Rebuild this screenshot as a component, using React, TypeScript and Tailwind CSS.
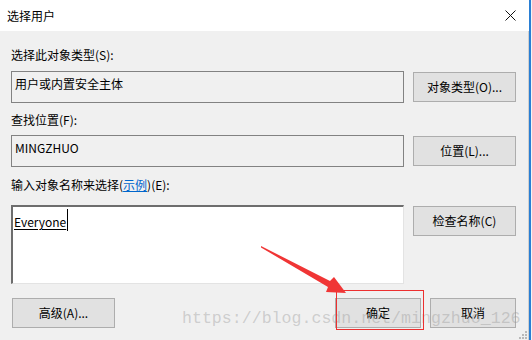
import React from "react";

const FONT = { fontFamily: '"Microsoft YaHei", "Noto Sans CJK SC", "Noto Sans", sans-serif' };

function Btn({ children, className = "" }: { children: React.ReactNode; className?: string }) {
  return (
    <div
      className={`flex items-center justify-center h-[30px] bg-[#e1e1e1] border border-[#adadad] text-[12px] leading-[16px] text-black ${className}`}
    >
      {children}
    </div>
  );
}

export default function App() {
  return (
    <div className="relative w-[532px] h-[340px] overflow-hidden bg-white flex" style={FONT}>
      {/* dialog */}
      <div className="w-[528px] h-full flex flex-col">
        {/* title bar */}
        <div className="h-[31px] bg-white flex items-center justify-between pl-[7px] pr-[12px] shrink-0">
          <span className="text-[12px] leading-[16px] text-black">选择用户</span>
          <svg width="11" height="11" viewBox="0 0 11 11">
            <path d="M0.5 0.5 L10.5 10.5 M10.5 0.5 L0.5 10.5" stroke="#111" strokeWidth="1" />
          </svg>
        </div>
        {/* body */}
        <div className="flex-1 bg-[#f0f0f0] flex flex-col pl-[11px] text-[12px] leading-[16px] text-black">
          <div className="mt-[16px] h-[16px]">选择此对象类型(S):</div>
          <div className="mt-[8px] flex items-center gap-[9px]">
            <div className="w-[393px] h-[32px] border border-[#828282] bg-[#f0f0f0] pl-[3px] pt-[4px]">
              用户或内置安全主体
            </div>
            <Btn className="w-[103px]">对象类型(O)...</Btn>
          </div>
          <div className="mt-[9px] h-[16px]">查找位置(F):</div>
          <div className="mt-[7px] flex items-center gap-[9px]">
            <div className="w-[393px] h-[32px] border border-[#828282] bg-[#f0f0f0] pl-[3px] pt-[4px]">
              MINGZHUO
            </div>
            <Btn className="w-[103px]">位置(L)...</Btn>
          </div>
          <div className="mt-[10px] h-[16px]">
            输入对象名称来选择(<span className="text-[#0066cc] underline">示例</span>)(E):
          </div>
          <div className="mt-[12px] flex items-start gap-[9px]">
            <div className="w-[393px] h-[79px] bg-white border-t-2 border-l-2 border-t-[#6d6d6d] border-l-[#6d6d6d] border-b border-r border-b-[#e3e3e3] border-r-[#e3e3e3] pl-[1px] pt-[7px] flex items-start">
              <span className="underline underline-offset-[2px]">Everyone</span>
              <span className="inline-block w-[1px] h-[22px] bg-black -mt-[5px] ml-[1px]" />
            </div>
            <Btn className="w-[103px] h-[29px] mt-[1px]">检查名称(C)</Btn>
          </div>
          <div className="mt-[14px] flex items-center">
            <Btn className="w-[103px] ml-[1px]">高级(A)...</Btn>
            <div className="flex-1" />
            <Btn className="w-[86px]">确定</Btn>
            <Btn className="w-[86px] ml-[9px] mr-[12px]">取消</Btn>
          </div>
        </div>
      </div>
      {/* right edges */}
      <div className="w-[1px] h-full flex flex-col">
        <div className="h-[31px] bg-white" />
        <div className="flex-1 bg-[#cfcfcf]" />
      </div>
      <div className="w-[2px] h-full bg-[#2a7fd4]" />
      <div className="w-[1px] h-full bg-[#f4f4f4]" />

      {/* resize grip */}
      <svg className="absolute left-[519px] top-[331px]" width="9" height="9" viewBox="0 0 9 9">
        <rect x="6" y="0" width="2" height="2" fill="#b8b8b8" />
        <rect x="3" y="3" width="2" height="2" fill="#b8b8b8" />
        <rect x="6" y="3" width="2" height="2" fill="#b8b8b8" />
        <rect x="0" y="6" width="2" height="2" fill="#b8b8b8" />
        <rect x="3" y="6" width="2" height="2" fill="#b8b8b8" />
        <rect x="6" y="6" width="2" height="2" fill="#b8b8b8" />
      </svg>

      {/* watermark */}
      <div
        className="absolute left-[182px] top-[309px] text-[16.6px] leading-[20px] text-[rgba(150,150,150,0.4)] whitespace-nowrap pointer-events-none"
        style={{ fontFamily: '"Liberation Mono", monospace' }}
      >
        https://blog.csdn.net/mingzhuo_126
      </div>

      {/* annotation: red box + arrow */}
      <svg className="absolute left-0 top-0 pointer-events-none" width="532" height="340" viewBox="0 0 532 340">
        <rect x="336.5" y="290.5" width="87" height="39" fill="none" stroke="#ec2f2f" strokeWidth="1" />
        <polygon
          points="261,246 330,281 334,277 346,293 326,292 328,287 261,247.5"
          fill="#f03535"
        />
      </svg>
    </div>
  );
}
